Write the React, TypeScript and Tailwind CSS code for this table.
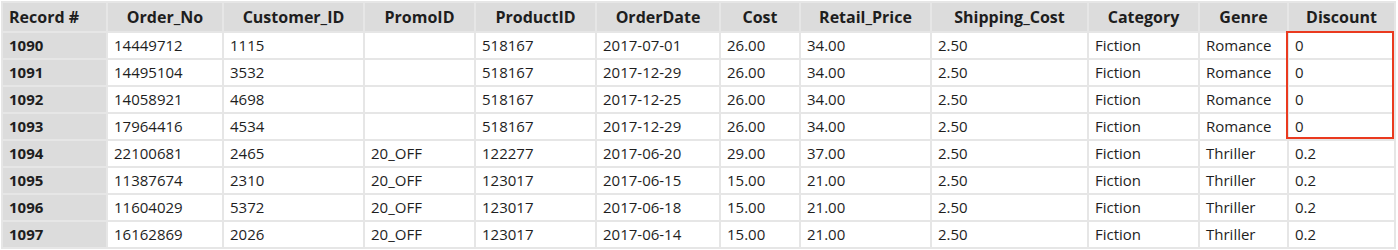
import React from "react";

const columns = [
    { name: "Record #", width: 103 },
    { name: "Order_No", width: 114 },
    { name: "Customer_ID", width: 139 },
    { name: "PromoID", width: 109 },
    { name: "ProductID", width: 119 },
    { name: "OrderDate", width: 122 },
    { name: "Cost", width: 78 },
    { name: "Retail_Price", width: 129 },
    { name: "Shipping_Cost", width: 155 },
    { name: "Category", width: 109 },
    { name: "Genre", width: 87 },
    { name: "Discount", width: 105 },
];

const rows: string[][] = [
    ["1090", "14449712", "1115", "", "518167", "2017-07-01", "26.00", "34.00", "2.50", "Fiction", "Romance", "0"],
    ["1091", "14495104", "3532", "", "518167", "2017-12-29", "26.00", "34.00", "2.50", "Fiction", "Romance", "0"],
    ["1092", "14058921", "4698", "", "518167", "2017-12-25", "26.00", "34.00", "2.50", "Fiction", "Romance", "0"],
    ["1093", "17964416", "4534", "", "518167", "2017-12-29", "26.00", "34.00", "2.50", "Fiction", "Romance", "0"],
    ["1094", "22100681", "2465", "20_OFF", "122277", "2017-06-20", "29.00", "37.00", "2.50", "Fiction", "Thriller", "0.2"],
    ["1095", "11387674", "2310", "20_OFF", "123017", "2017-06-15", "15.00", "21.00", "2.50", "Fiction", "Thriller", "0.2"],
    ["1096", "11604029", "5372", "20_OFF", "123017", "2017-06-18", "15.00", "21.00", "2.50", "Fiction", "Thriller", "0.2"],
    ["1097", "16162869", "2026", "20_OFF", "123017", "2017-06-14", "15.00", "21.00", "2.50", "Fiction", "Thriller", "0.2"],
];

export default function App() {
    const template = columns.map((c) => `${c.width}px`).join(" ");

    return (
        <div className="w-[1398px] h-[250px] bg-white overflow-hidden" style={{ fontFamily: '"Open Sans", "Noto Sans", sans-serif' }}>
            <div className="relative pl-px pt-px">
                <div
                    className="grid gap-[2px] p-[2px] bg-[#e6e6e6] w-fit text-[15px] text-[#1e1e1e]"
                    style={{ gridTemplateColumns: template, gridTemplateRows: "28px repeat(8, 25px)" }}
                >
                    {columns.map((c, i) => (
                        <div
                            key={c.name}
                            className={
                                i === 0
                                    ? "bg-[#dcdcdc] flex items-center pl-[6px] font-bold text-[16px] leading-none"
                                    : "bg-[#dcdcdc] flex items-center justify-center font-bold text-[16px] leading-none"
                            }
                        >
                            {c.name}
                        </div>
                    ))}
                    {rows.map((row) =>
                        row.map((val, i) =>
                            i === 0 ? (
                                <div key={row[0] + i} className="bg-[#dcdcdc] flex items-center pl-[6px] font-bold leading-none">
                                    {val}
                                </div>
                            ) : (
                                <div key={row[0] + i} className="bg-white flex items-center pl-[6px] leading-none">
                                    {val}
                                </div>
                            )
                        )
                    )}
                </div>
                {/* highlight round the zero discounts */}
                <div className="absolute left-[1286px] top-[31px] w-[108px] h-[108px] border-2 border-[#ea3a1f] pointer-events-none" />
            </div>
        </div>
    );
}
